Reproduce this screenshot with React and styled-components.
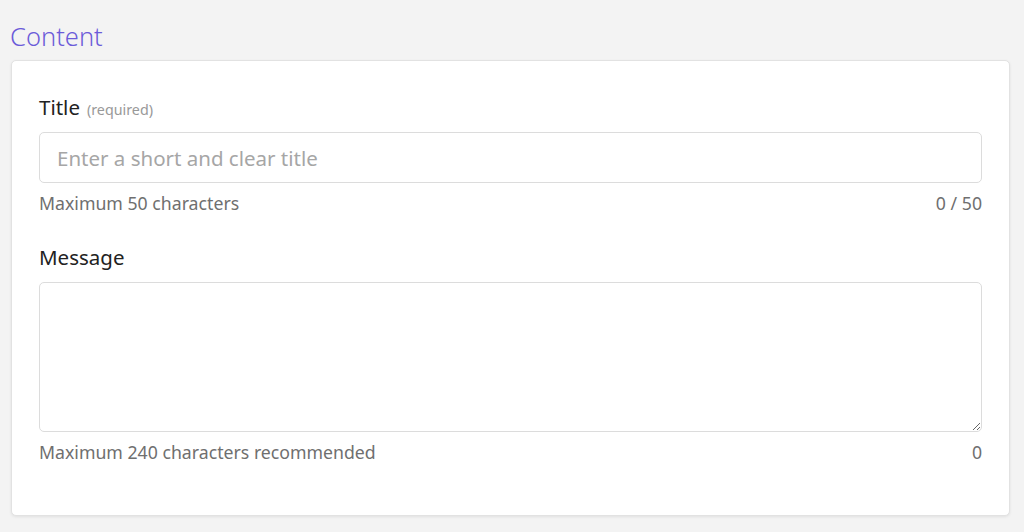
import React, { useState } from 'react';
import styled, { createGlobalStyle } from 'styled-components';

const GlobalStyle = createGlobalStyle`
  html, body {
    margin: 0;
    padding: 0;
    background: #f3f3f3;
    font-family: "Noto Sans", "Open Sans", sans-serif;
  }
`;

const Page = styled.div`
  padding: 18px 14px 16px 11px;
`;

const Heading = styled.h2`
  margin: 0 0 6px -1px;
  font-weight: 300;
  font-size: 25.5px;
  line-height: 36px;
  color: #6b5bd9;
`;

const Card = styled.div`
  background: #fff;
  border: 1px solid #e2e2e2;
  border-radius: 5px;
  box-shadow: 0 1px 3px rgba(0, 0, 0, 0.08);
  padding: 32px 27px 50px 27px;
`;

const Field = styled.div`
  display: flex;
  flex-direction: column;
  & + & {
    margin-top: 27px;
  }
`;

const Label = styled.label`
  font-size: 20.5px;
  line-height: 28px;
  color: #222;
  margin-bottom: 11px;
`;

const Hint = styled.span`
  font-size: 14.3px;
  line-height: 1;
  color: #999;
  margin-left: 7px;
`;

const TextInput = styled.input`
  box-sizing: border-box;
  height: 51px;
  padding: 0 17px;
  border: 1px solid #dcdcdc;
  border-radius: 5px;
  font-family: inherit;
  font-size: 20.5px;
  color: #222;
  outline: none;
  &::placeholder {
    color: #a6a6a6;
  }
`;

const TextArea = styled.textarea`
  box-sizing: border-box;
  height: 150px;
  padding: 12px 17px;
  border: 1px solid #dcdcdc;
  border-radius: 5px;
  font-family: inherit;
  font-size: 20.5px;
  resize: vertical;
  outline: none;
`;

const Footer = styled.div`
  display: flex;
  justify-content: space-between;
  margin-top: 7px;
  font-size: 17.7px;
  line-height: 26px;
  color: #6f6f6f;
`;

export default function App() {
  const [title, setTitle] = useState('');
  const [message, setMessage] = useState('');

  return (
    <Page>
      <GlobalStyle />
      <Heading>Content</Heading>
      <Card>
        <Field>
          <Label>
            Title<Hint>(required)</Hint>
          </Label>
          <TextInput
            value={title}
            maxLength={50}
            onChange={(e) => setTitle(e.target.value)}
            placeholder="Enter a short and clear title"
          />
          <Footer>
            <span>Maximum 50 characters</span>
            <span>{title.length} / 50</span>
          </Footer>
        </Field>
        <Field>
          <Label>Message</Label>
          <TextArea value={message} onChange={(e) => setMessage(e.target.value)} />
          <Footer>
            <span>Maximum 240 characters recommended</span>
            <span>{message.length}</span>
          </Footer>
        </Field>
      </Card>
    </Page>
  );
}
